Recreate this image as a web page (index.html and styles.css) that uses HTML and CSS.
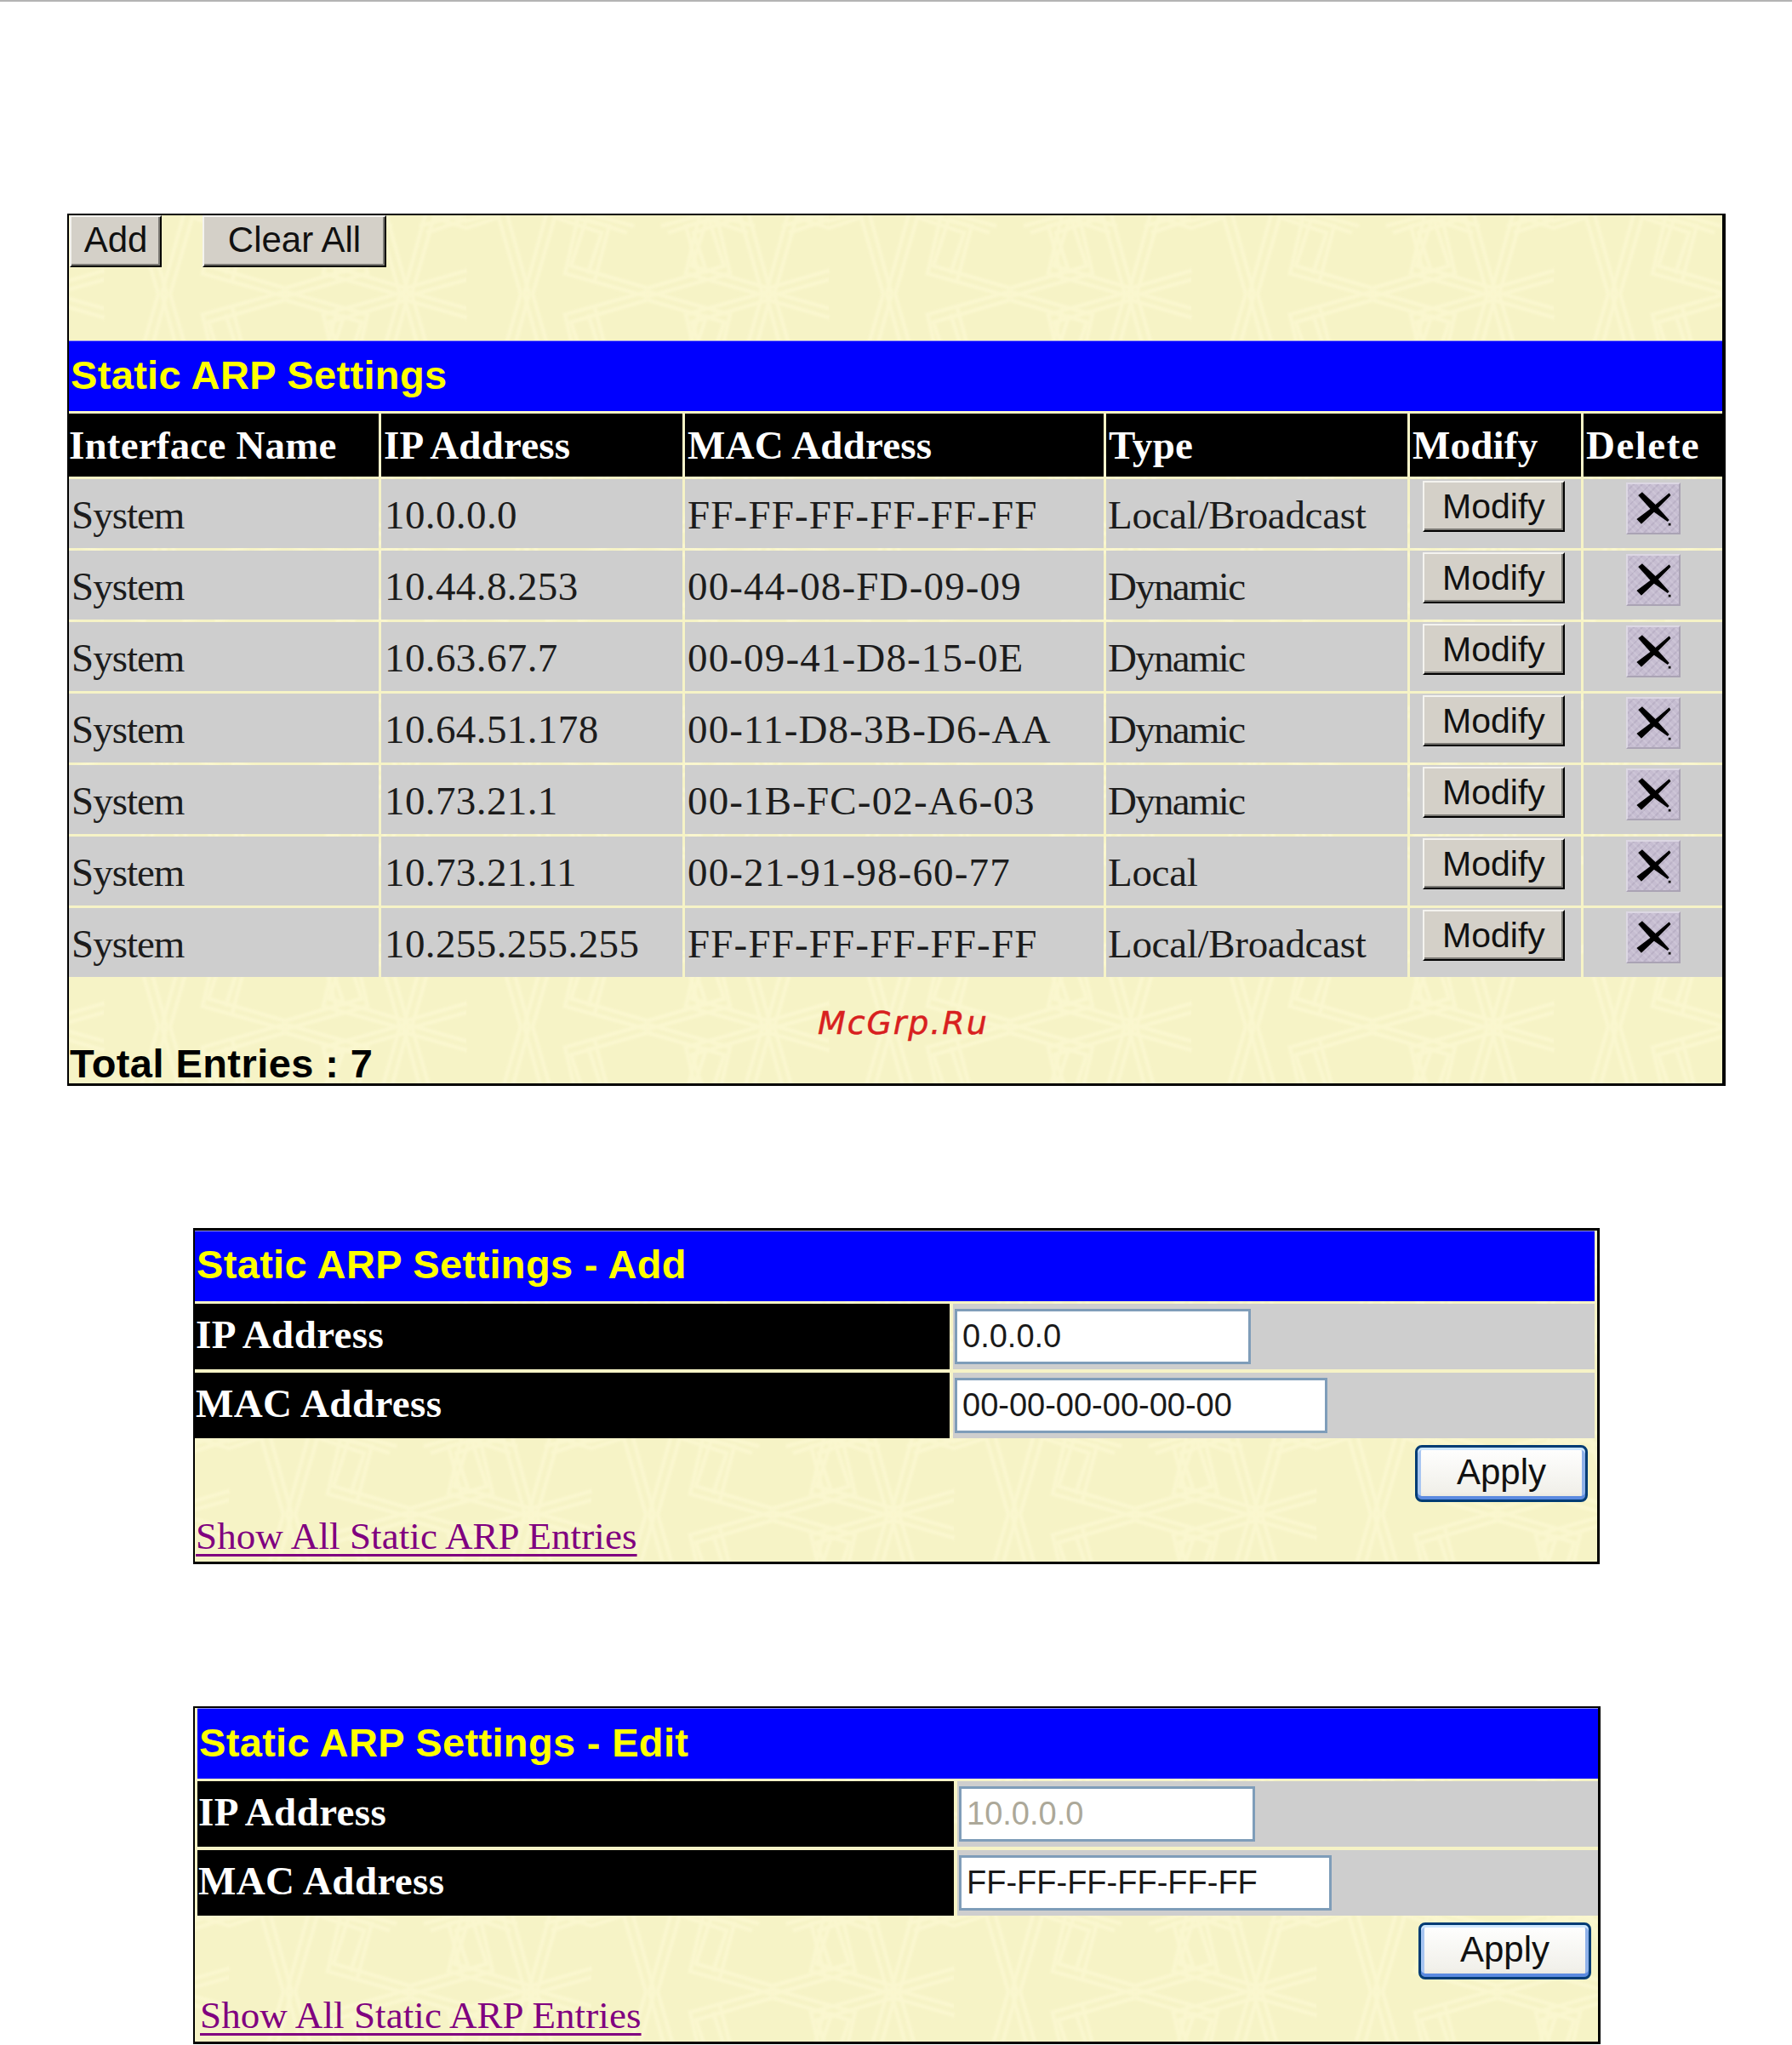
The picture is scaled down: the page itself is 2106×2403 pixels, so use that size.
FILE: index.html
```html
<!DOCTYPE html>
<html lang="en">
<head>
<meta charset="utf-8">
<title>Static ARP Settings</title>
<link rel="stylesheet" href="styles.css">
</head>
<body>
<svg class="defs" width="0" height="0" aria-hidden="true">
  <symbol id="x-icon" viewBox="0 0 64 61">
    <path d="M11 44 L17 50 L36 32 L54 14 L52 11 L31 29 Z" fill="#000"/>
    <path d="M13 14 L18 10 L35 26 L52 45 L50 47 L30 33 Z" fill="#000"/>
    <rect x="51" y="49" width="3" height="3" fill="#111"/>
  </symbol>
</svg>

<section class="frame list">
  <div class="actions">
    <button class="btn">Add</button>
    <button class="btn">Clear All</button>
  </div>
  <h1 class="title">Static ARP Settings</h1>
  <table class="arp">
    <colgroup>
      <col class="c1"><col class="c2"><col class="c3"><col class="c4"><col class="c5"><col class="c6">
    </colgroup>
    <thead>
      <tr><th class="first">Interface Name</th><th>IP Address</th><th>MAC Address</th><th>Type</th><th>Modify</th><th class="wide">Delete</th></tr>
    </thead>
    <tbody>
      <tr><td class="sys">System</td><td class="ipc">10.0.0.0</td><td class="macc">FF-FF-FF-FF-FF-FF</td><td class="type">Local/Broadcast</td><td class="act"><button class="btn mod">Modify</button></td><td class="act"><span class="del"><svg><use href="#x-icon"/></svg></span></td></tr>
      <tr><td class="sys">System</td><td class="ipc">10.44.8.253</td><td class="macc">00-44-08-FD-09-09</td><td class="dyn">Dynamic</td><td class="act"><button class="btn mod">Modify</button></td><td class="act"><span class="del"><svg><use href="#x-icon"/></svg></span></td></tr>
      <tr><td class="sys">System</td><td class="ipc">10.63.67.7</td><td class="macc">00-09-41-D8-15-0E</td><td class="dyn">Dynamic</td><td class="act"><button class="btn mod">Modify</button></td><td class="act"><span class="del"><svg><use href="#x-icon"/></svg></span></td></tr>
      <tr><td class="sys">System</td><td class="ipc">10.64.51.178</td><td class="macc">00-11-D8-3B-D6-AA</td><td class="dyn">Dynamic</td><td class="act"><button class="btn mod">Modify</button></td><td class="act"><span class="del"><svg><use href="#x-icon"/></svg></span></td></tr>
      <tr><td class="sys">System</td><td class="ipc">10.73.21.1</td><td class="macc">00-1B-FC-02-A6-03</td><td class="dyn">Dynamic</td><td class="act"><button class="btn mod">Modify</button></td><td class="act"><span class="del"><svg><use href="#x-icon"/></svg></span></td></tr>
      <tr><td class="sys">System</td><td class="ipc">10.73.21.11</td><td class="macc">00-21-91-98-60-77</td><td class="type">Local</td><td class="act"><button class="btn mod">Modify</button></td><td class="act"><span class="del"><svg><use href="#x-icon"/></svg></span></td></tr>
      <tr><td class="sys">System</td><td class="ipc">10.255.255.255</td><td class="macc">FF-FF-FF-FF-FF-FF</td><td class="type">Local/Broadcast</td><td class="act"><button class="btn mod">Modify</button></td><td class="act"><span class="del"><svg><use href="#x-icon"/></svg></span></td></tr>
    </tbody>
  </table>
  <p class="total">Total Entries : 7</p>
  <span class="mark">McGrp.Ru</span>
</section>

<section class="frame form add">
  <h1 class="title">Static ARP Settings - Add</h1>
  <div class="fields">
    <label class="name">IP Address</label>
    <div class="val"><input class="ip" type="text" value="0.0.0.0"></div>
    <label class="name">MAC Address</label>
    <div class="val"><input class="mac" type="text" value="00-00-00-00-00-00"></div>
  </div>
  <button class="apply">Apply</button>
  <a class="show" href="#">Show All Static ARP Entries</a>
</section>

<section class="frame form edit">
  <h1 class="title">Static ARP Settings - Edit</h1>
  <div class="fields">
    <label class="name">IP Address</label>
    <div class="val"><input class="ip" type="text" value="10.0.0.0" disabled></div>
    <label class="name">MAC Address</label>
    <div class="val"><input class="mac" type="text" value="FF-FF-FF-FF-FF-FF"></div>
  </div>
  <button class="apply">Apply</button>
  <a class="show" href="#">Show All Static ARP Entries</a>
</section>
</body>
</html>
```
FILE: styles.css
```css
* { box-sizing: border-box; }
html, body { margin: 0; background: #fff; }
body {
  border-top: 2px solid #b4b4b4;
  height: 2403px;
  overflow: hidden;
  font-family: "Liberation Serif", "Times New Roman", serif;
}
.defs { position: absolute; }

.frame {
  position: relative;
  display: flex;
  flex-direction: column;
  border-style: solid;
  border-color: #000;
  background-color: #f6f3c6;
  background-image: url("data:image/svg+xml,%3Csvg xmlns='http://www.w3.org/2000/svg' xmlns:xlink='http://www.w3.org/1999/xlink' width='426' height='287' viewBox='0 0 426 287'%3E%3Cdefs%3E%3Cfilter id='b' x='-5%25' y='-5%25' width='110%25' height='110%25'%3E%3CfeGaussianBlur stdDeviation='1.1'/%3E%3C/filter%3E%3Cpath id='q' d='M0 -7 L90 -33 L72 -88 L24 -72 M0 3 L97 -24 L80 -97 L16 -80'/%3E%3Cg id='h'%3E%3Cuse xlink:href='%23q'/%3E%3Cuse xlink:href='%23q' transform='scale(-1 1)'/%3E%3Cuse xlink:href='%23q' transform='scale(1 -1)'/%3E%3Cuse xlink:href='%23q' transform='scale(-1 -1)'/%3E%3C/g%3E%3C/defs%3E%3Cg fill='none' stroke='%23faf7cf' stroke-width='4.5' filter='url(%23b)'%3E%3Cuse xlink:href='%23h' transform='translate(71 143.5) rotate(90)'/%3E%3Cuse xlink:href='%23h' transform='translate(213 143.5)'/%3E%3Cuse xlink:href='%23h' transform='translate(355 143.5)'/%3E%3Cuse xlink:href='%23h' transform='translate(355 143.5) rotate(90)'/%3E%3C/g%3E%3C/svg%3E");
  background-repeat: repeat;
}

.list {
  width: 1949px;
  height: 1025px;
  margin: 249px 0 0 79px;
  border-width: 2px 4px 3px 2px;
  background-position: 41px -51px;
}
.form {
  width: 1653px;
  height: 395px;
  margin: 167px 0 0 227px;
  border-width: 3px 3px 3px 2px;
  background-position: 40px 190px;
}
.add { padding-right: 3px; }
.edit { width: 1654px; height: 397px; border-width: 2px 3px 3px 2px; padding: 0 0 0 3px; }

.actions { display: flex; gap: 48px; height: 147px; padding-left: 1px; align-items: flex-start; }

.btn {
  height: 61px;
  padding: 0 0 3px;
  font: 400 42px/1 "Liberation Sans", Arial, sans-serif;
  color: #111;
  background: #d4d0c8;
  border-style: solid;
  border-width: 2px;
  border-color: #f4f3ef #000 #000 #f4f3ef;
  box-shadow: inset -2px -2px 0 #7c7a75;
}
.actions .btn:first-child { width: 108px; }
.actions .btn:last-child { width: 216px; }

.title {
  margin: 0;
  height: 83px;
  padding-left: 2px;
  background: #00f;
  border-top: 1px solid #8f8ff0;
  color: #ff0;
  font: 700 47px/80px "Liberation Sans", Arial, sans-serif;
  letter-spacing: 0.33px;
}
.add .title { line-height: 78px; }

.arp {
  table-layout: fixed;
  border-collapse: separate;
  border-spacing: 3px;
  width: 1949px;
  margin: 0 0 0 -3px;
  font-size: 47px;
  line-height: 1;
}
.c1 { width: 364px; }
.c2 { width: 354px; }
.c3 { width: 492px; }
.c4 { width: 354px; }
.c5 { width: 201px; }
.c6 { width: 163px; }
.arp th, .arp td { overflow: hidden; white-space: nowrap; }
.arp th {
  height: 74px;
  padding: 1px 0 0 3px;
  background: #000;
  color: #fff;
  font-weight: 700;
  text-align: left;
  letter-spacing: 0.2px;
}
.arp th.first { padding-left: 0; }
.arp th.wide { letter-spacing: 1.5px; }
.arp td {
  height: 81px;
  padding: 4px 0 0 3px;
  background: #cecece;
  color: #1c1c1c;
}
.arp td.sys { letter-spacing: -1px; }
.arp td.ipc { padding-left: 4px; letter-spacing: 0.4px; }
.arp td.macc { letter-spacing: 1.15px; }
.arp td.type { padding-left: 2px; letter-spacing: -0.3px; }
.arp td.dyn { padding-left: 2px; letter-spacing: -1.7px; }
.arp td.act { padding: 2px 0 0; text-align: center; vertical-align: top; letter-spacing: 0; }
.mod { width: 167px; height: 60px; margin-right: 4px; display: inline-block; padding: 0; font-size: 41px; }
.del {
  display: inline-block;
  width: 64px;
  height: 61px;
  margin-top: 2px;
  background-color: #c6bdd1;
  background-image:
    repeating-linear-gradient(45deg, rgba(255,255,255,.12) 0 2px, transparent 2px 6px),
    repeating-linear-gradient(-45deg, rgba(90,80,110,.10) 0 2px, transparent 2px 7px);
  border: 2px solid;
  border-color: #dcd7e3 #aaa3b4 #aaa3b4 #dcd7e3;
}
.del svg { display: block; width: 60px; height: 57px; }

.total {
  margin: auto 0 0 0;
  padding: 0 0 0 1px;
  font: 700 47px/1 "Liberation Sans", Arial, sans-serif;
  color: #000;
  height: 47px;
  letter-spacing: 0.43px;
}
.mark {
  position: absolute;
  left: 880px;
  top: 930px;
  font: italic 400 38px/1 "DejaVu Sans", sans-serif;
  letter-spacing: 1.9px;
  color: #d8201f;
  -webkit-text-stroke: 0.5px #d8201f;
}

.fields {
  display: grid;
  grid-template-columns: 887px 1fr;
  column-gap: 4px;
  row-gap: 4px;
  margin-top: 3px;
}
.edit .fields { grid-template-columns: 889px 1fr; }
.name {
  height: 77px;
  padding-left: 1px;
  background: #000;
  color: #fff;
  font: 700 47px/72px "Liberation Serif", "Times New Roman", serif;
  letter-spacing: 0.4px;
}
.val {
  height: 77px;
  padding-left: 2px;
  background: #cecece;
  display: flex;
  align-items: center;
}
.val input {
  height: 65px;
  padding: 0 0 0 6px;
  border: 3px solid #7f9db9;
  background: #fff;
  color: #1a1a1a;
  font: 400 38px/1 "Liberation Sans", Arial, sans-serif;
}
.val input:disabled { color: #aca899; background: #fff; }
.ip { width: 348px; }
.mac { width: 438px; }

.apply {
  align-self: flex-end;
  width: 203px;
  height: 67px;
  margin: 8px 8px 0 0;
  padding: 0 0 4px;
  font: 400 42px/1 "Liberation Sans", Arial, sans-serif;
  color: #111;
  border: 3px solid #003c74;
  border-radius: 8px;
  background: linear-gradient(#ffffff, #f1f0ea 85%, #e6e4da);
  box-shadow: inset 0 3px 0 #cee7ff, inset 0 -4px 0 #5b8ae0, inset 4px 0 0 #a8c6f2, inset -4px 0 0 #8fb2ea;
}
.show {
  margin-top: auto;
  margin-left: 1px;
  margin-bottom: 5px;
  align-self: flex-start;
  font: 400 45px/1.1 "Liberation Serif", "Times New Roman", serif;
  color: #800080;
  letter-spacing: 0.1px;
  text-decoration-thickness: 3px;
  text-underline-offset: 6px;
}
.edit .show { margin-left: 3px; margin-bottom: 6px; }
```
